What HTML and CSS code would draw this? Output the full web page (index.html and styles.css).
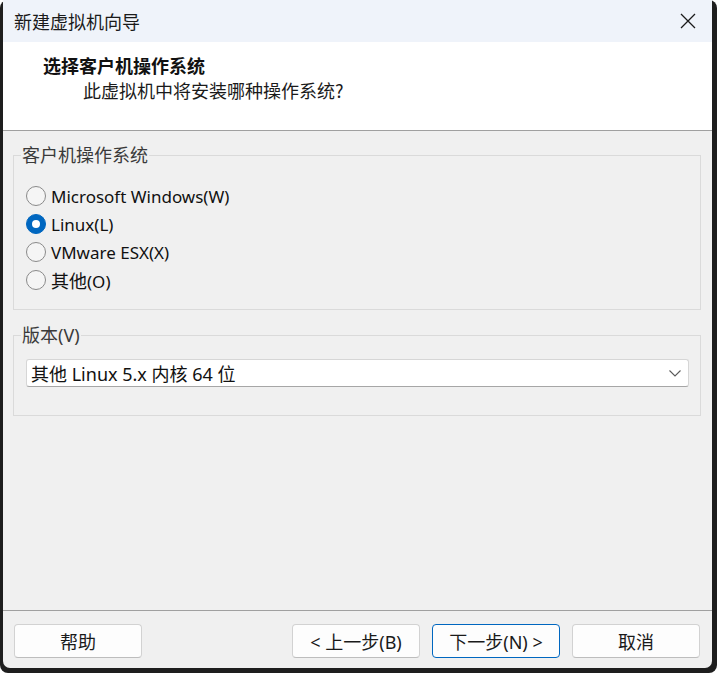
FILE: index.html
```html
<!DOCTYPE html>
<html lang="zh-CN">
<head>
<meta charset="utf-8">
<title>新建虚拟机向导</title>
<link rel="stylesheet" href="styles.css">
</head>
<body>
<div class="frame">
  <div class="window">
    <div class="titlebar">
      <span class="title">新建虚拟机向导</span>
      <svg class="close" width="16" height="16" viewBox="0 0 16 16"><path d="M1 1L15 15M15 1L1 15" stroke="#1a1a1a" stroke-width="1.3" fill="none"/></svg>
    </div>
    <div class="header">
      <div class="h-title">选择客户机操作系统</div>
      <div class="h-sub">此虚拟机中将安装哪种操作系统?</div>
    </div>
    <div class="body">
      <fieldset class="group">
        <legend>客户机操作系统</legend>
        <div class="radios">
          <div class="radio"><span class="dot"></span><span>Microsoft Windows(W)</span></div>
          <div class="radio"><span class="dot on"></span><span>Linux(L)</span></div>
          <div class="radio"><span class="dot"></span><span>VMware ESX(X)</span></div>
          <div class="radio"><span class="dot"></span><span><span class="cjk">其他</span>(O)</span></div>
        </div>
      </fieldset>
      <fieldset class="group group2">
        <legend>版本(V)</legend>
        <div class="version">
          <div class="select">
            <span class="value">其他 Linux 5.x 内核 64 位</span>
            <svg class="chev" width="12" height="7" viewBox="0 0 12 7"><path d="M0.5 0.5L6 6L11.5 0.5" stroke="#5a5a5a" stroke-width="1.1" fill="none"/></svg>
          </div>
        </div>
      </fieldset>
    </div>
    <div class="footer">
      <button class="btn">帮助</button>
      <div class="spacer"></div>
      <button class="btn">&lt; 上一步(B)</button>
      <button class="btn primary">下一步(N) &gt;</button>
      <button class="btn">取消</button>
    </div>
  </div>
</div>
</body>
</html>
```
FILE: styles.css
```css
html, body {
  margin: 0;
  padding: 0;
  background: #ffffff;
}
body {
  font-family: "Noto Sans", "Noto Sans CJK SC", sans-serif;
  color: #1a1a1a;
}
.frame {
  width: 717px;
  height: 673px;
  box-sizing: border-box;
  padding: 0 5px 5px 3px;
  background: #1e1e1e;
  border-radius: 8px;
}
.window {
  width: 709px;
  height: 668px;
  display: flex;
  flex-direction: column;
  background: #f0f0f0;
  border-radius: 0 0 7px 7px;
  overflow: hidden;
}
.titlebar {
  height: 42px;
  flex: none;
  background: #eff3fa;
  display: flex;
  align-items: center;
  padding: 0 16px 0 11px;
}
.title {
  font-family: "Noto Sans CJK SC", sans-serif;
  font-size: 18px;
  color: #1a1a1a;
  flex: 1;
}
.close {
  display: block;
}
.header {
  height: 89px;
  flex: none;
  box-sizing: border-box;
  background: #ffffff;
  border-bottom: 1px solid #a0a0a0;
  padding: 11px 0 0 40px;
}
.h-title {
  font-family: "Noto Sans CJK SC", sans-serif;
  font-weight: bold;
  font-size: 18px;
  line-height: 24px;
  color: #111;
}
.h-sub {
  font-family: "Noto Sans CJK SC", sans-serif;
  font-size: 18px;
  line-height: 24px;
  margin: 1px 0 0 40px;
  color: #1a1a1a;
}
.body {
  flex: 1;
  padding: 13px 11px 0 10px;
}
.group {
  margin: 0;
  padding: 0;
  border: 1px solid #dadada;
  min-width: 0;
}
.group legend {
  font-size: 18px;
  line-height: 22px;
  padding: 0 1px;
  margin-left: 7px;
  color: #3a3a3a;
}
.radios {
  padding: 16px 0 15px 12px;
}
.radio {
  height: 28px;
  display: flex;
  align-items: center;
  font-size: 17px;
  color: #111;
}
.cjk {
  font-size: 18px;
}
.dot {
  width: 18px;
  height: 18px;
  border: 1px solid #8a8a8a;
  border-radius: 50%;
  background: #f5f5f5;
  margin-right: 5px;
  flex: none;
  box-sizing: content-box;
  display: flex;
  align-items: center;
  justify-content: center;
}
.dot.on {
  background: #0067c0;
  border-color: #0067c0;
}
.dot.on::after {
  content: "";
  width: 8px;
  height: 8px;
  border-radius: 50%;
  background: #ffffff;
}
.group2 {
  margin-top: 14px;
}
.version {
  padding: 13px 11px 28px 12px;
}
.select {
  height: 28px;
  box-sizing: border-box;
  background: #ffffff;
  border: 1px solid #d6d6d6;
  border-bottom-color: #a6a6a6;
  border-radius: 3px;
  display: flex;
  align-items: center;
  padding: 0 7px 0 4px;
  font-size: 18px;
  color: #111;
}
.value {
  flex: 1;
}
.chev {
  display: block;
}
.footer {
  height: 58px;
  flex: none;
  box-sizing: border-box;
  border-top: 1px solid #a0a0a0;
  display: flex;
  align-items: flex-start;
  gap: 12px;
  padding: 13px 12px 0 11px;
}
.spacer {
  flex: 1;
}
.btn {
  width: 128px;
  height: 34px;
  box-sizing: border-box;
  background: #fdfdfd;
  border: 1px solid #d2d2d2;
  border-bottom-color: #bdbdbd;
  border-radius: 4px;
  font-family: "Noto Sans", "Noto Sans CJK SC", sans-serif;
  font-size: 18px;
  color: #1a1a1a;
  padding: 0;
}
.btn.primary {
  border: 1px solid #0067c0;
}
```
